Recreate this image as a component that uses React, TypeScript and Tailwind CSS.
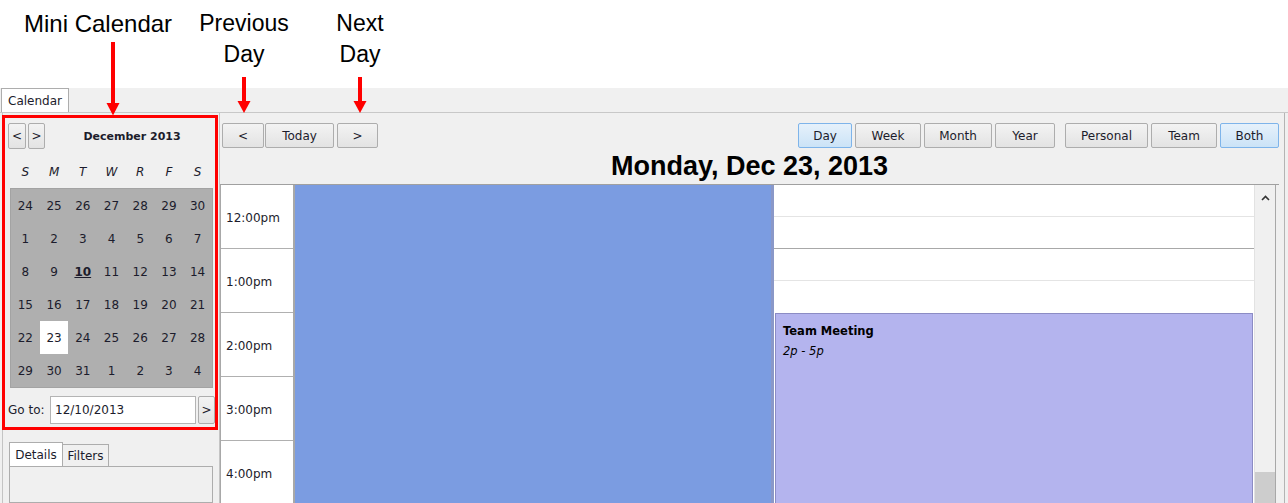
import React from 'react';

const weeks = [
  ['24', '25', '26', '27', '28', '29', '30'],
  ['1', '2', '3', '4', '5', '6', '7'],
  ['8', '9', '10', '11', '12', '13', '14'],
  ['15', '16', '17', '18', '19', '20', '21'],
  ['22', '23', '24', '25', '26', '27', '28'],
  ['29', '30', '31', '1', '2', '3', '4'],
];

const dayNames = ['S', 'M', 'T', 'W', 'R', 'F', 'S'];
const hours = ['12:00pm', '1:00pm', '2:00pm', '3:00pm', '4:00pm'];

function Btn({ children, w, h = 'h-[25px]', active = false }: { children: React.ReactNode; w: string; h?: string; active?: boolean }) {
  return (
    <div
      className={
        'flex shrink-0 items-center justify-center rounded-[2px] border ' +
        w +
        ' ' +
        h +
        (active
          ? ' border-[#7eb4ea] bg-gradient-to-b from-[#e6f1fb] to-[#cbe3f7]'
          : ' border-[#adadad] bg-gradient-to-b from-[#f3f3f3] to-[#e3e3e3]')
      }
    >
      {children}
    </div>
  );
}

function Annotations() {
  return (
    <>
      <div className="absolute left-[24px] top-[8px] font-['Liberation_Sans',Arial,sans-serif] text-[24px] leading-[31px] text-black">
        Mini Calendar
      </div>
      <div className="absolute left-[194px] top-[8px] w-[100px] text-center font-['Liberation_Sans',Arial,sans-serif] text-[23px] leading-[31px] text-black">
        Previous
        <br />
        Day
      </div>
      <div className="absolute left-[310px] top-[8px] w-[100px] text-center font-['Liberation_Sans',Arial,sans-serif] text-[23px] leading-[31px] text-black">
        Next
        <br />
        Day
      </div>
      <svg className="absolute left-0 top-0" width="400" height="120" viewBox="0 0 400 120">
        <rect x="111" y="42" width="4" height="62" fill="#ff0000" />
        <polygon points="106.5,103 119.5,103 113,115.5" fill="#ff0000" />
        <rect x="242" y="77" width="4" height="25" fill="#ff0000" />
        <polygon points="237.5,101 250.5,101 244,113" fill="#ff0000" />
        <rect x="358" y="77" width="4" height="25" fill="#ff0000" />
        <polygon points="353.5,101 366.5,101 360,113" fill="#ff0000" />
      </svg>
      <div className="absolute left-[2px] top-[115px] h-[315px] w-[216px] border-[3px] border-[#ff0000]" />
    </>
  );
}

function MiniCalendar() {
  return (
    <div className="flex h-full w-[217px] flex-col border-r border-[#c4c4c4] pl-[5px] pt-[10px]">
      <div className="flex h-[26px] items-center">
        <Btn w="w-[18px]" h="h-[26px]">
          &lt;
        </Btn>
        <div className="ml-[2px]">
          <Btn w="w-[17px]" h="h-[26px]">
            &gt;
          </Btn>
        </div>
        <div className="flex-1 pt-[3px] text-center text-[11px] font-bold">December 2013</div>
      </div>
      <div className="mt-[14px] ml-[3px] grid h-[22px] w-[201px] grid-cols-7 items-center italic">
        {dayNames.map((d, i) => (
          <div key={i} className="text-center">
            {d}
          </div>
        ))}
      </div>
      <div className="mt-[7px] ml-[2px] w-[203px] border border-[#a3a3a3] bg-[#afafaf]">
        {weeks.map((row, r) => (
          <div key={r} className="grid h-[33px] grid-cols-7">
            {row.map((d, c) => (
              <div
                key={c}
                className={
                  'flex items-center justify-center ' +
                  (r === 4 && c === 1 ? 'bg-white' : '') +
                  (r === 2 && c === 2 ? ' font-bold underline' : '')
                }
              >
                {d}
              </div>
            ))}
          </div>
        ))}
      </div>
      <div className="mt-[8px] flex h-[28px] items-center">
        <div className="w-[42px]">Go to:</div>
        <div className="flex h-[28px] w-[146px] items-center border border-[#b4b4b4] bg-white pl-[4px]">12/10/2013</div>
        <div className="ml-[2px] flex h-[28px] w-[17px] items-center justify-center rounded-[2px] border border-[#adadad] bg-gradient-to-b from-[#f3f3f3] to-[#e3e3e3]">
          &gt;
        </div>
      </div>
      <div className="mt-[18px] ml-[1px] flex items-end">
        <div className="flex h-[24px] w-[54px] items-center justify-center border border-b-0 border-[#adadad] bg-white">Details</div>
        <div className="flex h-[22px] w-[46px] items-center justify-center border border-b-0 border-l-0 border-[#adadad] bg-[#f0f0f0]">
          Filters
        </div>
      </div>
      <div className="ml-[1px] h-[60px] w-[204px] border border-[#adadad] bg-[#f0f0f0]" />
    </div>
  );
}

function DayView() {
  return (
    <div className="flex min-h-0 flex-1 border-t border-[#a0a0a0]">
      <div className="w-[75px] shrink-0 border-l border-r-2 border-[#a8a8a8] bg-white">
        {hours.map((h) => (
          <div key={h} className="flex h-[64px] items-center border-b border-[#b0b0b0] pl-[5px] pt-[3px]">
            {h}
          </div>
        ))}
      </div>
      <div className="w-[476px] shrink-0 bg-[#7b9ce1]" />
      <div className="w-[3px] shrink-0 bg-[#8a98c8]" />
      <div className="relative w-[480px] shrink-0 bg-white">
        <div className="h-[32px] border-b border-[#e4e4e4]" />
        <div className="h-[32px] border-b border-[#a8a8a8]" />
        <div className="h-[32px] border-b border-[#e4e4e4]" />
        <div className="h-[32px]" />
        <div className="ml-[1px] mr-[1px] h-[200px] border border-[#8c8cc4] bg-[#b4b4ee] pl-[7px] pt-[7px]">
          <div className="text-[11.5px] font-bold leading-[20px] text-black">Team Meeting</div>
          <div className="text-[11.5px] italic leading-[20px] text-black">2p - 5p</div>
        </div>
      </div>
      <div className="flex w-[22px] shrink-0 flex-col border-l border-[#e2e2e2] border-r border-r-[#a8a8a8] bg-[#f0f0f0]">
        <div className="flex h-[26px] items-center justify-center">
          <svg width="9" height="6" viewBox="0 0 9 6">
            <polyline points="1,5 4.5,1.5 8,5" fill="none" stroke="#333" strokeWidth="1.6" />
          </svg>
        </div>
        <div className="h-[261px]" />
        <div className="flex-1 bg-[#cdcdcd]" />
      </div>
    </div>
  );
}

export default function App() {
  return (
    <div className="relative h-[503px] w-[1288px] overflow-hidden bg-white font-['DejaVu_Sans',sans-serif] text-[12px] text-[#1c1c2c]">
      <div className="h-[88px]" />
      <div className="flex h-[415px] flex-col bg-[#f0f0f0]">
        <div className="flex h-[25px] items-end border-b border-[#c8c8c8] pl-[1px]">
          <div className="flex h-[24px] w-[68px] items-center justify-center border border-b-0 border-[#adadad] bg-white">
            Calendar
          </div>
        </div>
        <div className="flex min-h-0 flex-1">
          <div className="ml-[2px] h-full border-l border-[#c4c4c4]">
            <MiniCalendar />
          </div>
          <div className="flex h-full w-[1065px] flex-col border-r border-[#b4b4b4] pr-[5px]">
            <div className="flex h-[35px] items-end pl-[2px]">
              <Btn w="w-[42px]">&lt;</Btn>
              <div className="ml-[1px]">
                <Btn w="w-[69px]">Today</Btn>
              </div>
              <div className="ml-[3px]">
                <Btn w="w-[41px]">&gt;</Btn>
              </div>
              <div className="flex-1" />
              <div className="flex gap-[3px]">
                <Btn w="w-[54px]" active>
                  Day
                </Btn>
                <Btn w="w-[66px]">Week</Btn>
                <Btn w="w-[68px]">Month</Btn>
                <Btn w="w-[60px]">Year</Btn>
              </div>
              <div className="ml-[10px] flex gap-[3px]">
                <Btn w="w-[83px]">Personal</Btn>
                <Btn w="w-[66px]">Team</Btn>
                <Btn w="w-[59px]" active>
                  Both
                </Btn>
              </div>
            </div>
            <div className="flex h-[36px] items-center justify-center font-['Liberation_Sans',Arial,sans-serif] text-[27px] font-bold text-black">
              Monday, Dec 23, 2013
            </div>
            <DayView />
          </div>
        </div>
      </div>
      <Annotations />
    </div>
  );
}
